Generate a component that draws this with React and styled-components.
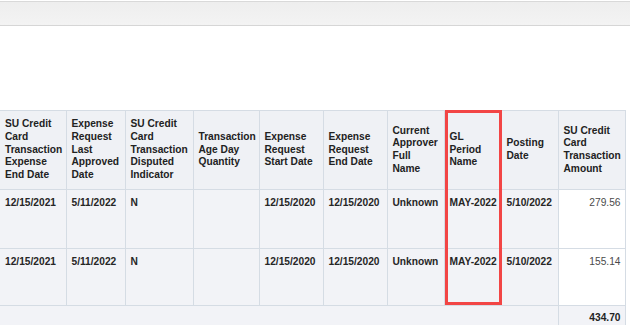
import React from 'react'
import styled, { createGlobalStyle } from 'styled-components'

const GlobalStyle = createGlobalStyle`
  html, body {
    margin: 0;
    padding: 0;
    background: #ffffff;
  }
  body {
    font-family: 'Liberation Sans', Arial, sans-serif;
    overflow: hidden;
  }
`

//------------------------------------------------------------------------
// Page chrome
//------------------------------------------------------------------------

const Page = styled.div`
  width: 630px;
  height: 325px;
  padding-top: 1px;
  box-sizing: border-box;
`

const TopBar = styled.div`
  height: 23px;
  border-top: 1px solid #d9d9d9;
  border-bottom: 1px solid #d6d6d6;
  background: linear-gradient(#eeeeee, #f3f3f3);
`

const Spacer = styled.div`
  height: 84px;
`

//------------------------------------------------------------------------
// Report table
//------------------------------------------------------------------------

const TableWrap = styled.div`
  position: relative;
`

const Table = styled.table`
  border-collapse: collapse;
  table-layout: fixed;
  width: 625px;
  font-size: 10.2px;
  line-height: 12.7px;
  color: #222;
`

const HeadCell = styled.th`
  height: 79px;
  padding: 0 3px 0 5px;
  text-align: left;
  vertical-align: middle;
  font-weight: bold;
  background: #eff1f5;
  border: 1px solid #d5dce4;
  border-left: ${props => (props.first ? 'none' : '1px solid #d5dce4')};
  box-sizing: border-box;
`

const Cell = styled.td`
  height: ${props => props.h}px;
  padding: 7px 4px 0 5px;
  vertical-align: top;
  white-space: nowrap;
  overflow: hidden;
  font-weight: ${props => (props.amount ? 'normal' : 'bold')};
  color: ${props => (props.amount ? '#4a4a4a' : '#262626')};
  text-align: ${props => (props.amount ? 'right' : 'left')};
  background: ${props => (props.amount ? '#ffffff' : '#f2f3f7')};
  border: 1px solid #d5dce4;
  border-left: ${props => (props.first ? 'none' : '1px solid #d5dce4')};
  box-sizing: border-box;
`

const FootCell = styled.td`
  height: 22px;
  padding: 6px 4px 0 5px;
  vertical-align: top;
  text-align: right;
  font-weight: bold;
  color: #222;
  background: #f2f3f7;
  border: 1px solid #d5dce4;
  border-left: ${props => (props.first ? 'none' : '1px solid #d5dce4')};
  box-sizing: border-box;
`

const Highlight = styled.div`
  position: absolute;
  left: 445px;
  top: 0;
  width: 57px;
  height: 195px;
  border: 3px solid #f24545;
  box-sizing: border-box;
  pointer-events: none;
`

const columns = [
  { w: 66, label: ['SU Credit', 'Card', 'Transaction', 'Expense', 'End Date'] },
  { w: 59, label: ['Expense', 'Request', 'Last', 'Approved', 'Date'] },
  { w: 68, label: ['SU Credit', 'Card', 'Transaction', 'Disputed', 'Indicator'] },
  { w: 66, label: ['Transaction', 'Age Day', 'Quantity'] },
  { w: 64, label: ['Expense', 'Request', 'Start Date'] },
  { w: 64, label: ['Expense', 'Request', 'End Date'] },
  { w: 57, label: ['Current', 'Approver', 'Full', 'Name'] },
  { w: 57, label: ['GL', 'Period', 'Name'] },
  { w: 57, label: ['Posting', 'Date'] },
  { w: 67, label: ['SU Credit', 'Card', 'Transaction', 'Amount'] },
]

const rows = [
  { h: 59, values: ['12/15/2021', '5/11/2022', 'N', '', '12/15/2020', '12/15/2020', 'Unknown', 'MAY-2022', '5/10/2022', '279.56'] },
  { h: 57, values: ['12/15/2021', '5/11/2022', 'N', '', '12/15/2020', '12/15/2020', 'Unknown', 'MAY-2022', '5/10/2022', '155.14'] },
]

const ReportTable = () => (
  <TableWrap>
    <Table>
      <colgroup>
        {columns.map((c, i) => (
          <col key={i} style={{ width: c.w }} />
        ))}
      </colgroup>
      <thead>
        <tr>
          {columns.map((c, i) => (
            <HeadCell key={i} first={i === 0}>
              {c.label.map((line, j) => (
                <React.Fragment key={j}>
                  {j > 0 && <br />}
                  {line}
                </React.Fragment>
              ))}
            </HeadCell>
          ))}
        </tr>
      </thead>
      <tbody>
        {rows.map((r, i) => (
          <tr key={i}>
            {r.values.map((v, j) => (
              <Cell key={j} h={r.h} first={j === 0} amount={j === r.values.length - 1}>
                {v}
              </Cell>
            ))}
          </tr>
        ))}
        <tr>
          <FootCell first colSpan={9} />
          <FootCell>434.70</FootCell>
        </tr>
      </tbody>
    </Table>
    <Highlight />
  </TableWrap>
)

export default function App() {
  return (
    <Page>
      <GlobalStyle />
      <TopBar />
      <Spacer />
      <ReportTable />
    </Page>
  )
}
